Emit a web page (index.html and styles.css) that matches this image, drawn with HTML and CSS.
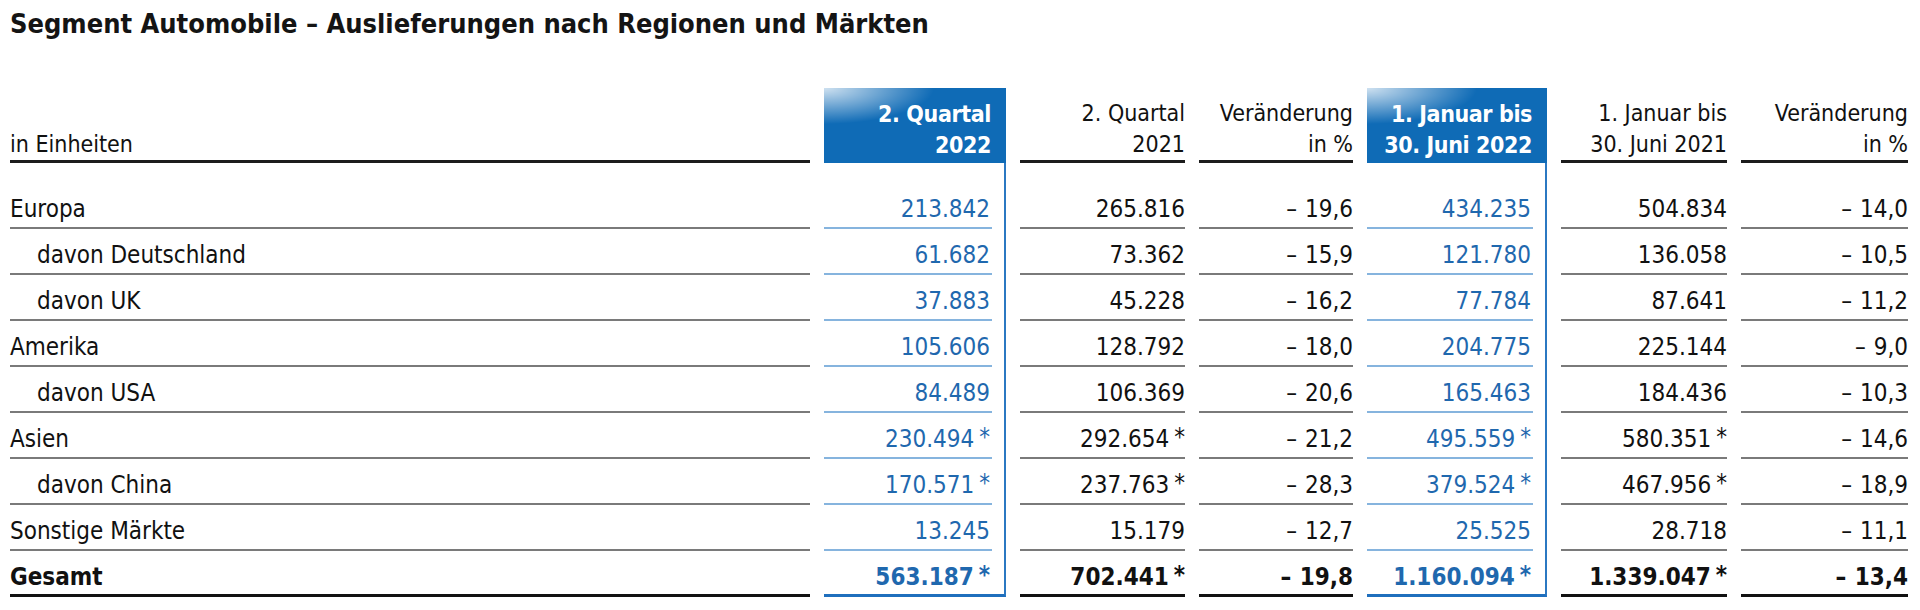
FILE: index.html
```html
<!DOCTYPE html>
<html lang="de">
<head>
<meta charset="utf-8">
<title>Segment Automobile – Auslieferungen nach Regionen und Märkten</title>
<link rel="stylesheet" href="styles.css">
</head>
<body>
<h1 class="title">Segment Automobile – Auslieferungen nach Regionen und Märkten</h1>
<div class="table">
  <div class="hcell label">in Einheiten</div>
  <div class="hcell hl">2. Quartal<br>2022</div>
  <div class="hcell">2. Quartal<br>2021</div>
  <div class="hcell">Veränderung<br>in %</div>
  <div class="hcell hl">1. Januar bis<br>30. Juni 2022</div>
  <div class="hcell">1. Januar bis<br>30. Juni 2021</div>
  <div class="hcell">Veränderung<br>in %</div>

  <div class="cell label first">Europa</div>
  <div class="cell hl first"><div class="v">213.842</div></div>
  <div class="cell first">265.816</div>
  <div class="cell neg first">– 19,6</div>
  <div class="cell hl first"><div class="v">434.235</div></div>
  <div class="cell first">504.834</div>
  <div class="cell neg first">– 14,0</div>

  <div class="cell label sub">davon Deutschland</div>
  <div class="cell hl"><div class="v">61.682</div></div>
  <div class="cell">73.362</div>
  <div class="cell neg">– 15,9</div>
  <div class="cell hl"><div class="v">121.780</div></div>
  <div class="cell">136.058</div>
  <div class="cell neg">– 10,5</div>

  <div class="cell label sub">davon UK</div>
  <div class="cell hl"><div class="v">37.883</div></div>
  <div class="cell">45.228</div>
  <div class="cell neg">– 16,2</div>
  <div class="cell hl"><div class="v">77.784</div></div>
  <div class="cell">87.641</div>
  <div class="cell neg">– 11,2</div>

  <div class="cell label">Amerika</div>
  <div class="cell hl"><div class="v">105.606</div></div>
  <div class="cell">128.792</div>
  <div class="cell neg">– 18,0</div>
  <div class="cell hl"><div class="v">204.775</div></div>
  <div class="cell">225.144</div>
  <div class="cell neg">– 9,0</div>

  <div class="cell label sub">davon USA</div>
  <div class="cell hl"><div class="v">84.489</div></div>
  <div class="cell">106.369</div>
  <div class="cell neg">– 20,6</div>
  <div class="cell hl"><div class="v">165.463</div></div>
  <div class="cell">184.436</div>
  <div class="cell neg">– 10,3</div>

  <div class="cell label">Asien</div>
  <div class="cell hl"><div class="v">230.494<span class="ast">*</span></div></div>
  <div class="cell">292.654<span class="ast">*</span></div>
  <div class="cell neg">– 21,2</div>
  <div class="cell hl"><div class="v">495.559<span class="ast">*</span></div></div>
  <div class="cell">580.351<span class="ast">*</span></div>
  <div class="cell neg">– 14,6</div>

  <div class="cell label sub">davon China</div>
  <div class="cell hl"><div class="v">170.571<span class="ast">*</span></div></div>
  <div class="cell">237.763<span class="ast">*</span></div>
  <div class="cell neg">– 28,3</div>
  <div class="cell hl"><div class="v">379.524<span class="ast">*</span></div></div>
  <div class="cell">467.956<span class="ast">*</span></div>
  <div class="cell neg">– 18,9</div>

  <div class="cell label">Sonstige Märkte</div>
  <div class="cell hl"><div class="v">13.245</div></div>
  <div class="cell">15.179</div>
  <div class="cell neg">– 12,7</div>
  <div class="cell hl"><div class="v">25.525</div></div>
  <div class="cell">28.718</div>
  <div class="cell neg">– 11,1</div>

  <div class="cell label total">Gesamt</div>
  <div class="cell hl total"><div class="v">563.187<span class="ast">*</span></div></div>
  <div class="cell total">702.441<span class="ast">*</span></div>
  <div class="cell neg total">– 19,8</div>
  <div class="cell hl total"><div class="v">1.160.094<span class="ast">*</span></div></div>
  <div class="cell total">1.339.047<span class="ast">*</span></div>
  <div class="cell neg total">– 13,4</div>
</div>
</body>
</html>
```
FILE: styles.css
```css
html, body {
  margin: 0;
  padding: 0;
  background: #ffffff;
}
body {
  padding-left: 10px;
  font-family: "DejaVu Sans Condensed", "DejaVu Sans", sans-serif;
  color: #111111;
}
.title {
  margin: 0;
  padding-top: 8px;
  height: 88px;
  box-sizing: border-box;
  font-size: 27px;
  line-height: 32px;
  font-weight: bold;
  color: #141414;
}
.table {
  display: grid;
  grid-template-columns: 800px 182px 165px 154px 180px 166px 167px;
  column-gap: 14px;
  font-size: 24px;
}
.hcell {
  height: 75px;
  box-sizing: border-box;
  border-bottom: 3px solid #1c1c1c;
  display: flex;
  align-items: flex-end;
  justify-content: flex-end;
  text-align: right;
  font-size: 23px;
  line-height: 31px;
  padding-bottom: 0;
}
.hcell.label {
  justify-content: flex-start;
  text-align: left;
}
.hcell.hl {
  border-bottom: none;
  padding-bottom: 2px;
  padding-right: 15px;
  color: #ffffff;
  font-weight: bold;
  letter-spacing: -0.4px;
  background:
    radial-gradient(ellipse 110px 36px at 0 0, rgba(255,255,255,0.8), rgba(255,255,255,0) 100%),
    #0f6bb6;
}
.cell {
  height: 46px;
  box-sizing: border-box;
  border-bottom: 2px solid #7a7a7a;
  display: flex;
  align-items: flex-end;
  justify-content: flex-end;
  line-height: 30px;
  padding-bottom: 3px;
  white-space: nowrap;
}
.cell.neg {
  word-spacing: 1px;
}
.cell.first {
  height: 66px;
}
.cell.label {
  justify-content: flex-start;
}
.cell.label.sub {
  padding-left: 27px;
}
.cell.hl {
  border-bottom: none;
  border-right: 2px solid #2b78c2;
  padding-right: 12px;
  padding-bottom: 0;
  align-items: stretch;
}
.cell.hl .v {
  flex: 1;
  display: flex;
  align-items: flex-end;
  justify-content: flex-end;
  border-bottom: 2px solid #86b4de;
  padding-bottom: 3px;
  padding-right: 2px;
  color: #1f68ae;
}
.cell.total {
  font-weight: bold;
  border-bottom: 3px solid #111111;
  padding-bottom: 2px;
}
.cell.hl.total {
  border-bottom: 3px solid #1f6fbd;
  padding-right: 0;
  padding-bottom: 0;
}
.cell.hl.total .v {
  border-bottom: none;
  padding-right: 14px;
  padding-bottom: 2px;
}
.ast {
  margin-left: 5px;
  position: relative;
  top: -2px;
}
```
